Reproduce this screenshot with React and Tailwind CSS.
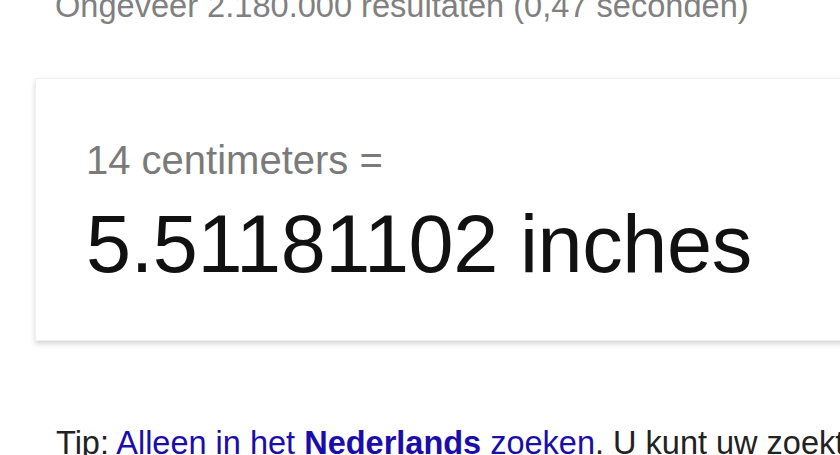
export default function App() {
  return (
    <div
      className="w-[840px] h-[455px] overflow-hidden bg-white pl-[35px]"
      style={{ fontFamily: '"Liberation Sans", Arial, sans-serif' }}
    >
      {/* result stats */}
      <div className="ml-[20px] -mt-[11px] text-[32.6px] leading-[33px] text-[#808080] whitespace-nowrap">
        Ongeveer 2.180.000 resultaten (0,47 seconden)
      </div>

      {/* unit conversion card */}
      <div className="mt-[56px] w-[900px] bg-white border border-[#efefef] shadow-[0_3px_5px_rgba(0,0,0,0.16)] pl-[50px] pt-[57px] pb-[48px]">
        <div className="text-[40px] leading-[48px] text-[#7a7a7a] whitespace-nowrap">
          14 centimeters =
        </div>
        <div className="mt-[12px] text-[81px] leading-[96px] tracking-[-0.4px] text-[#111] whitespace-nowrap">
          5.51181102 inches
        </div>
      </div>

      {/* language tip */}
      <div className="ml-[21px] mt-[82px] text-[32.5px] leading-[40px] text-[#222] whitespace-nowrap">
        Tip:{" "}
        <a className="text-[#1a0dab]">
          Alleen in het <b>Nederlands</b> zoeken
        </a>
        . U kunt uw zoektaal opgeven in Instellingen
      </div>
    </div>
  );
}
